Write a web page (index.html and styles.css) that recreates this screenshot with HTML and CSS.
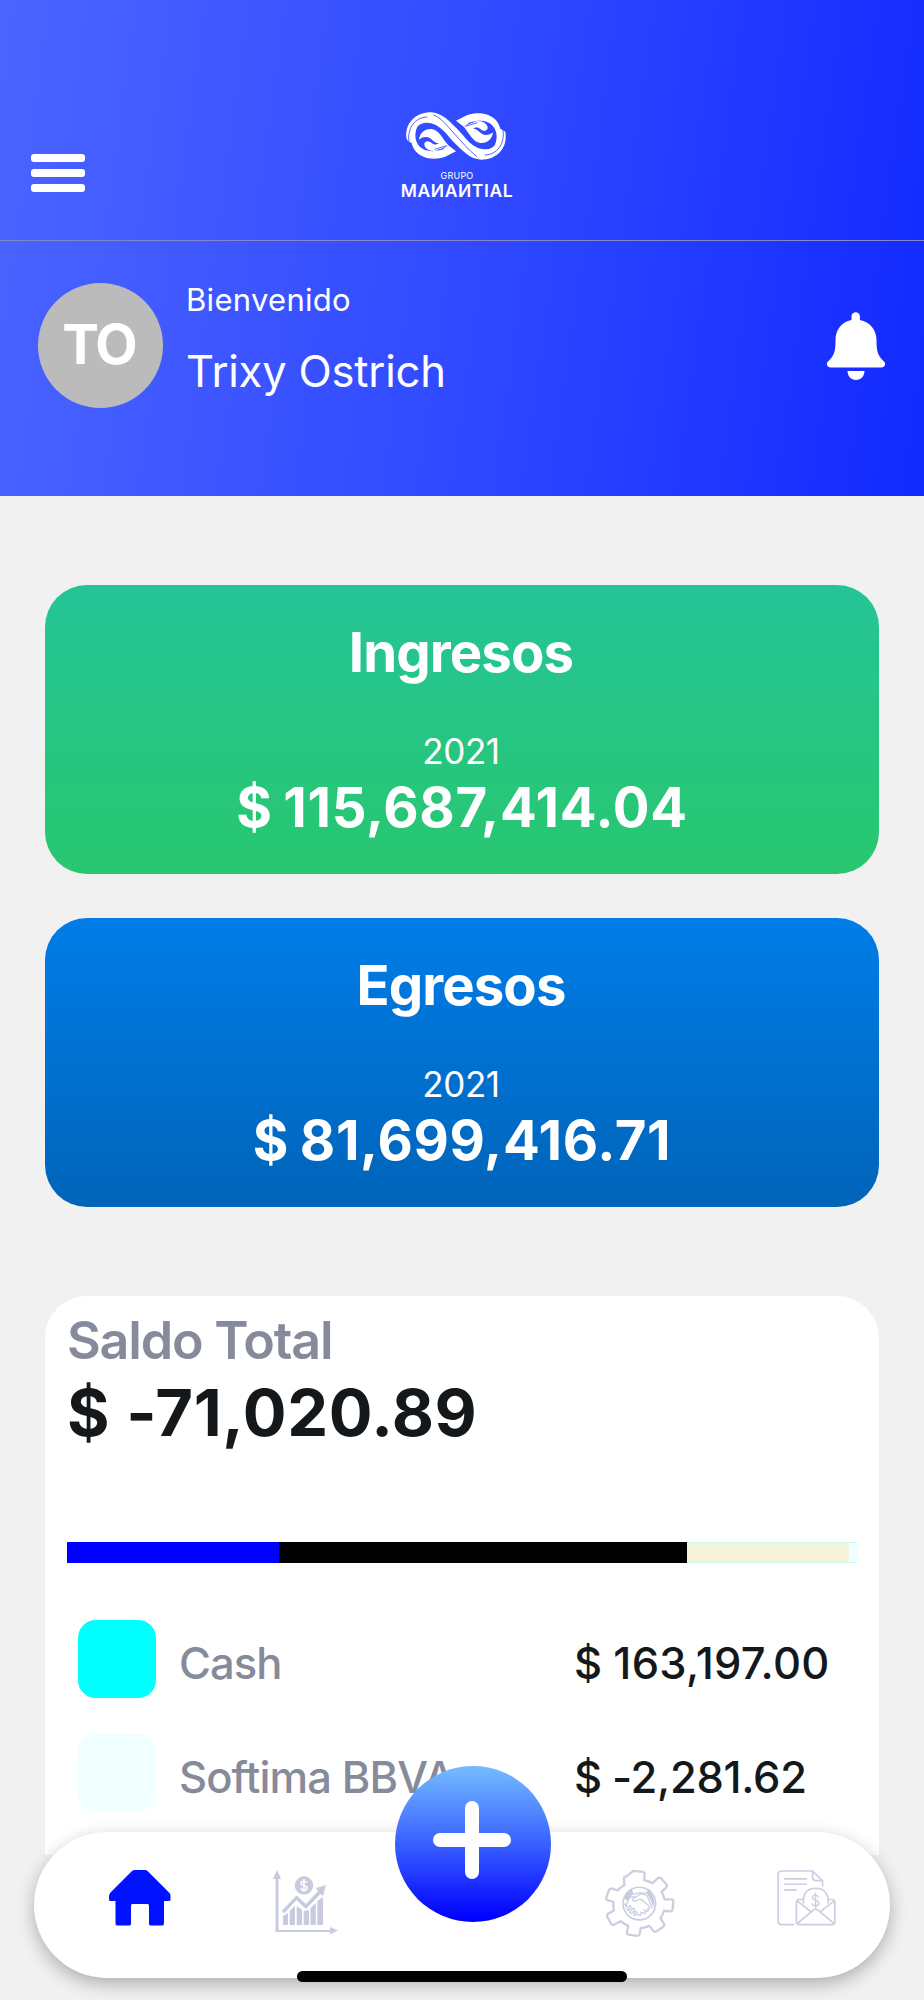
FILE: index.html
```html
<!DOCTYPE html>
<html lang="es">
<head>
    <meta charset="UTF-8">
    <meta name="viewport" content="width=device-width, initial-scale=1.0">
    <title>Grupo Manantial - Inicio</title>
    <link rel="stylesheet" href="styles.css">
</head>
<body>
    <header class="header">
        <div class="top-bar">
            <button class="menu-btn" aria-label="Menu">
                <span></span>
                <span></span>
                <span></span>
            </button>
            <div class="logo">
                <svg class="logo-mark" viewBox="46 35 300 144">
                    <path fill="#fff" d="M47 110C44 65 78 36 120 36c35 2 55 26 80 50 25 26 45 61 85 61 30-1 43-29 42-62 13 5 19 7 18 19 3 45-31 74-73 74-35-2-55-26-80-50-25-26-45-61-85-61-30 1-43 29-42 62-10-5-17-7-18-19z"/>
                    <g id="wave" fill="#fff">
                        <path d="M84 72C58 88 54 125 74 152c21 24 56 28 88 18l34-17-24-19c-22 23-70 26-89 0C70 115 72 92 84 72z"/>
                        <path d="M85 118c2-20 18-34 38-32 24 4 32 29 50 49-13 5-27 17-45 17-17-1-28-12-27-22 4-11 16-8 22-2 9 7 17 5 21 1-16-1-21-18-38-19-10 0-16 4-21 8z"/>
                    </g>
                    <use href="#wave" transform="rotate(180 196 107)"/>
                    <g fill="none" stroke="#3148ff" stroke-width="2.5">
                        <path d="M128 44c25 8 40 32 64 57 24 26 40 47 66 67"/>
                        <path d="M56 132C46 84 74 50 110 50M336 82c10 48-18 82-54 82"/>
                        <path d="M132 147l36-11M142 149l18-4M260 67l-36 11M250 65l-18 4"/>
                    </g>
                </svg>
                <div class="logo-group">GRUPO</div>
                <div class="logo-name">MAИAИTIAL</div>
            </div>
        </div>
        <div class="user-bar">
            <div class="avatar">TO</div>
            <div class="user-text">
                <div class="welcome">Bienvenido</div>
                <div class="user-name">Trixy Ostrich</div>
            </div>
            <svg class="bell" viewBox="0 0 60 68">
                <path fill="#fff" d="M25.500 8V4.500a4.200 4.200 0 0 1 8.400 0V8C44 10 50.500 18 50.500 28c0 11 1 15 6.500 20.500 4 3 2 7-2 7H5c-4 0-6-4-2-7C8.500 43 9.500 39 9.500 28c0-10 6-18 16-20zM21.500 59h17c0 5-3.500 9-8.500 9s-8.500-4-8.500-9z"/>
            </svg>
        </div>
    </header>

    <main class="content">
        <section class="card income">
            <h2>Ingresos</h2>
            <div class="year">2021</div>
            <div class="amount">$ 115,687,414.04</div>
        </section>

        <section class="card expenses">
            <h2>Egresos</h2>
            <div class="year">2021</div>
            <div class="amount">$ 81,699,416.71</div>
        </section>

        <section class="balance">
            <h3>Saldo Total</h3>
            <div class="total">$ -71,020.89</div>
            <div class="bar">
                <div class="blue" style="width: 26.8%"></div>
                <div class="black" style="width: 51.7%"></div>
                <div class="beige" style="width: 20.5%"></div>
                <div class="azure" style="width: 1%"></div>
            </div>
            <ul class="accounts">
                <li>
                    <span class="swatch cyan"></span>
                    <span class="name">Cash</span>
                    <span class="value">$ 163,197.00</span>
                </li>
                <li>
                    <span class="swatch azure"></span>
                    <span class="name">Softima BBVA</span>
                    <span class="value negative">$ -2,281.62</span>
                </li>
            </ul>
        </section>
    </main>

    <nav class="tab-bar">
        <!-- home -->
        <svg class="home-icon" viewBox="0 0 62 56">
            <path fill="#0011ff" d="M26 0h10c1.500 0 2 .5 3 1.500l21 21c1.500 1.500 1.500 2.500 1.500 4V29c0 1.500-.5 2-2 2H55v22c0 2-.8 2.500-2.500 2.500h-10c-2 0-2.500-.5-2.500-2.500V36c0-1.500-.5-2-2-2H24c-1.500 0-2 .5-2 2v17c0 2-.5 2.500-2.500 2.500H9C7.200 55.500 6.500 55 6.500 53V31H2c-1.500 0-2-.5-2-2v-2.500c0-1.500.5-2.500 1.500-4l21-21C23.500.5 24.500 0 26 0z"/>
        </svg>

        <!-- reports -->
        <svg class="chart-icon" viewBox="0 0 66 66">
            <g fill="#c8cbdf">
                <path d="M4 0l4 9H5.500v51H57v-3l8 3.500-8 4V62H2.500V9H0z"/>
                <path d="M10 46l5-3v12h-5zM16.700 41l5.300-5v19h-5.300zM23.700 36l5.300 4v15h-5.300zM30.700 41l5.300-1v15h-5.300zM37.500 38l5.300-5v22h-5.300zM44.300 31l5.700-4v28h-5.700z"/>
                <circle cx="31" cy="15.500" r="9.200"/>
                <path d="M43 18l10-3-3 11-2.500-2L33 39l-9.500-9L12 42.500c-2 1-3.500-1-2.500-2.500l14-14.500L33 34l12-13z"/>
            </g>
            <path d="M34 12.500c-1-1.500-6-2-6 .5 0 3 6.200 2 6.200 5 0 2.800-5.500 2.500-6.600.5M31 9v13" fill="none" stroke="#fff" stroke-width="1.600"/>
        </svg>

        <!-- services -->
        <svg class="gear-icon" viewBox="0 0 300 300">
            <g transform="translate(-5 0) scale(.98)" fill="none" stroke="#cbcee2" stroke-width="5" stroke-linejoin="round" stroke-linecap="round">
                <path stroke-width="7" d="M122 63l29 3q6 1 5 7l-1 18q14 3 25 10l16-15q6-5 11 0l15 17q5 6 0 11l-14 13q7 11 9 23l19 0q8 0 8 6l-2 24q-1 7-8 7l-19-2q-3 13-10 23l10 16q4 6-2 10l-20 14q-6 3-10-2l-13-15q-12 6-26 7l-3 18q-2 7-9 6l-25-4q-6-2-5-8l4-19q-13-5-23-14l-19 10q-6 4-10-2l-12-21q-3-7 3-10l17-10q-3-13-1-26l-17-5q-7-2-5-9l8-22q3-6 9-5l18 6q8-11 20-16l-1-20q0-7 8-7z" transform="translate(10 1)"/>
                <circle cx="150" cy="164" r="50"/>
                <path d="M120 123l10 13 21-5 18 2 12-11M112 172l-10-9M108 174l10-28 18-4M190 178l-16-38-17-7-28 17q2 9 12 5l14-5 25 22q6 8-5 9M113 178l8-8q5 1 3 7l-8 8q-5-1-3-7zm9 9l9-9q6 1 3 7l-9 9q-6-1-3-7zm10 8l7-7q6 1 3 7l-6 6q-5-1-4-6zM145 197l7 3q6-1 3-7M155 190l11 5q5-2 2-8M164 183l10 5q6-3 2-9" stroke-width="4"/>
                <path d="M104 150q4-22 22-32l5 13-14 24zM196 178q4-32-18-60l-5 15 9 15z" fill="#c8cbdf" stroke="none"/>
            </g>
        </svg>

        <!-- invoices -->
        <svg class="invoice-icon" viewBox="52 58 180 172">
            <g fill="none" stroke="#cbcee2" stroke-width="5" stroke-linecap="round" stroke-linejoin="round">
                <path d="M101 226H65q-10 0-10-10V74q0-10 10-10h94l30 30v15M159 65v19q0 9 9 9h20M75 88h65M75 104h65M75 121h34"/>
                <path d="M131 160q-2-43 37-44 39 1 38 44M130 150h-10q-10 0-10 10v57q0 9 9 9h98q9 0 9-9v-57q0-10-10-10h-9M112 154l40 31M225 154l-41 31M113 222l48-40q7-5 14 0l48 40"/>
                <path d="M176 142q-3-6-10-5-7 1-7 7 0 6 9 8 10 2 10 9 0 7-9 8-8 0-12-6M168 131v45" stroke-width="4"/>
            </g>
        </svg>
    </nav>

    <button class="add-btn" aria-label="Agregar">
        <span class="plus"></span>
    </button>
    <div class="home-indicator"></div>
</body>
</html>
```

FILE: styles.css
```css
/* Base styles */
* {
    box-sizing: border-box;
}

body {
    margin: 0;
    height: 2000px;
    overflow: hidden;
    position: relative;
    font-family: Inter, sans-serif;
    background: #f1f1f1;
}

button {
    border: none;
    padding: 0;
    background: none;
    cursor: pointer;
}

h2, h3, ul {
    margin: 0;
    padding: 0;
}

/* Header */
.header {
    height: 496px;
    background: linear-gradient(98deg, #4b65ff 0%, #3049ff 52%, #1229ff 100%);
    color: #fff;
}

.top-bar {
    height: 241px;
    padding: 112px 31px 0;
    display: grid;
    grid-template-columns: 1fr 120px 1fr;
    border-bottom: 1px solid #8288ca;
}

.menu-btn {
    width: 54px;
    margin-top: 42px;
    display: flex;
    flex-direction: column;
    gap: 7px;
}

.menu-btn span {
    width: 54px;
    height: 8px;
    border-radius: 3px;
    background: #fff;
}

.logo {
    display: flex;
    flex-direction: column;
    align-items: center;
    margin-left: -10px;
}

.logo-mark {
    width: 102px;
    height: 48px;
    margin-left: -3px;
}

.logo-group {
    margin-top: 10px;
    font-size: 9px;
    line-height: 11px;
    letter-spacing: 0.2px;
}

.logo-name {
    font-size: 17.5px;
    line-height: 20px;
    font-weight: 600;
    letter-spacing: 0.6px;
}

.user-bar {
    padding: 42px 38px 0;
    display: flex;
}

.avatar {
    width: 125px;
    height: 125px;
    padding-right: 3px;
    border-radius: 50%;
    background: #bbb;
    font-size: 55px;
    line-height: 122px;
    font-weight: 700;
    text-align: center;
    letter-spacing: -2px;
}

.user-text {
    margin-left: 23px;
    flex: 1;
}

.welcome {
    font-size: 31px;
    line-height: 34px;
    letter-spacing: 0.3px;
}

.user-name {
    margin-top: 29px;
    font-size: 43.5px;
    line-height: 50px;
    letter-spacing: -0.2px;
}

.bell {
    width: 60px;
    height: 68px;
    margin-top: 29px;
}

/* Cards */
.content {
    padding: 89px 45px 0;
}

.card {
    height: 289px;
    margin-bottom: 44px;
    padding-top: 33px;
    border-radius: 42px;
    color: #fff;
    text-align: center;
}

.income {
    background: linear-gradient(#25c497, #28c76f);
}

.expenses {
    background: linear-gradient(#007de8, #0064b9);
}

.card h2 {
    padding-right: 2px;
    font-size: 54.5px;
    line-height: 68px;
    font-weight: 700;
    letter-spacing: -0.9px;
}

.year {
    margin-top: 43px;
    padding-right: 2px;
    font-size: 35px;
    line-height: 44px;
    letter-spacing: -0.4px;
}

.amount {
    margin-top: 1px;
    font-size: 54.5px;
    line-height: 66px;
    font-weight: 700;
    letter-spacing: 0.7px;
    word-spacing: -3px;
}

/* Balance */
.balance {
    height: 559px;
    margin-top: 89px;
    padding: 11px 22px 0;
    border-radius: 42px 42px 0 0;
    background: #fff;
    color: #14181b;
}

.balance h3 {
    font-size: 52px;
    line-height: 68px;
    font-weight: 600;
    color: #868a9b;
    letter-spacing: -1.2px;
}

.total {
    font-size: 65px;
    line-height: 76px;
    font-weight: 700;
    letter-spacing: 0.6px;
}

.bar {
    height: 21px;
    margin-top: 91px;
    display: flex;
    border-top: 1px solid #ccf7ee;
    border-bottom: 1px solid #ccf7ee;
}

.blue {
    background: #00f;
    margin: -1px 0;
}

.black {
    background: #000;
    margin: -1px 0;
}

.beige {
    background: #f4f3da;
}

.azure {
    background: #f0ffff;
}

.cyan {
    background: #0ff;
}

.accounts {
    margin-top: 57px;
    padding-left: 11px;
    list-style: none;
}

.accounts li {
    height: 78px;
    margin-bottom: 36px;
    display: grid;
    grid-template-columns: 101px 395px 1fr;
    font-size: 43.5px;
    line-height: 86px;
    font-weight: 500;
    white-space: nowrap;
}

.swatch {
    width: 78px;
    height: 78px;
    border-radius: 18px;
}

.name {
    color: #868a9b;
    letter-spacing: -0.9px;
}

.value {
    letter-spacing: 0.3px;
    word-spacing: -1px;
}

.negative {
    letter-spacing: -0.3px;
}

/* Bottom navigation */
.tab-bar {
    position: absolute;
    left: 34px;
    right: 34px;
    bottom: 22px;
    height: 146px;
    padding: 0 53px 0 75px;
    display: flex;
    align-items: flex-start;
    border-radius: 73px;
    background: #fff;
    box-shadow: 0 6px 18px rgba(0, 0, 0, 0.28);
}

.home-icon {
    width: 62px;
    height: 56px;
    margin-top: 38px;
}

.chart-icon {
    width: 66px;
    height: 66px;
    margin: 38px 0 0 102px;
}

.gear-icon {
    width: 100px;
    height: 100px;
    margin: 18px 0 0 253px;
}

.invoice-icon {
    width: 60px;
    height: 57px;
    margin: 37px 0 0 auto;
}

.add-btn {
    position: absolute;
    left: 395px;
    bottom: 78px;
    width: 156px;
    height: 156px;
    border-radius: 50%;
    background: linear-gradient(#74bcff, #3c64ff 48%, #0000ff 98%);
}

.plus::before,
.plus::after {
    content: "";
    position: absolute;
    left: 38px;
    top: 67px;
    width: 78px;
    height: 14px;
    border-radius: 7px;
    background: #fff;
}

.plus::after {
    transform: rotate(90deg);
}

.home-indicator {
    position: absolute;
    left: 297px;
    bottom: 18px;
    width: 330px;
    height: 11px;
    border-radius: 6px;
    background: #000;
}
```
